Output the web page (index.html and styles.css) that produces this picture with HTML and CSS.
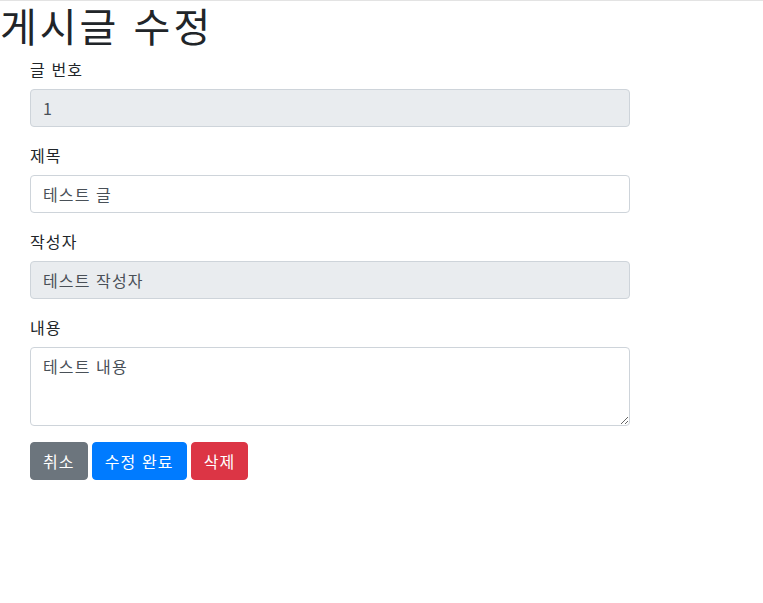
FILE: index.html
```html
<!DOCTYPE html>
<html lang="ko">
<head>
  <meta charset="UTF-8">
  <title>게시글 수정</title>
  <link rel="stylesheet" href="styles.css">
</head>
<body>
  <h1>게시글 수정</h1>
  <form class="edit-form">
    <div class="form-group">
      <label for="id">글 번호</label>
      <input type="text" id="id" class="form-control" value="1" readonly>
    </div>
    <div class="form-group">
      <label for="title">제목</label>
      <input type="text" id="title" class="form-control" value="테스트 글">
    </div>
    <div class="form-group">
      <label for="writer">작성자</label>
      <input type="text" id="writer" class="form-control" value="테스트 작성자" readonly>
    </div>
    <div class="form-group">
      <label for="content">내용</label>
      <textarea id="content" class="form-control content">테스트 내용</textarea>
    </div>
    <div class="actions">
      <button type="button" class="btn btn-secondary">취소</button>
      <button type="button" class="btn btn-primary">수정 완료</button>
      <button type="button" class="btn btn-danger">삭제</button>
    </div>
  </form>
</body>
</html>
```

FILE: styles.css
```css
body {
  margin: 0;
  border-top: 1px solid #e3e3e3;
  font-family: "Noto Sans CJK KR", "Noto Sans", sans-serif;
  font-size: 16px;
  line-height: 1.5;
  letter-spacing: 0.07em;
  color: #212529;
  background: #fff;
}
h1 {
  margin: 0 0 8px;
  font-size: 40px;
  font-weight: 400;
  line-height: 1.2;
  letter-spacing: 0.075em;
}
.edit-form {
  width: 600px;
  margin-left: 30px;
}
.form-group {
  margin-bottom: 16px;
}
label {
  display: inline-block;
  margin-bottom: 8px;
}
.form-control {
  display: block;
  box-sizing: border-box;
  width: 100%;
  height: 38px;
  padding: 6px 12px;
  font-family: inherit;
  font-size: 16px;
  line-height: 1.5;
  letter-spacing: inherit;
  color: #495057;
  background: #fff;
  border: 1px solid #ced4da;
  border-radius: 4px;
  margin: 0;
}
.form-control[readonly] {
  background-color: #e9ecef;
}
textarea.content {
  height: 79px;
  resize: vertical;
}
.actions {
  display: flex;
  gap: 4px;
}
.btn {
  height: 38px;
  padding: 6px 12px;
  font-family: inherit;
  font-size: 16px;
  line-height: 1.5;
  letter-spacing: inherit;
  color: #fff;
  border: 1px solid transparent;
  border-radius: 4px;
  cursor: pointer;
  margin: 0;
}
.btn-secondary {
  background-color: #6c757d;
  border-color: #6c757d;
}
.btn-primary {
  background-color: #007bff;
  border-color: #007bff;
}
.btn-danger {
  background-color: #dc3545;
  border-color: #dc3545;
}
```
